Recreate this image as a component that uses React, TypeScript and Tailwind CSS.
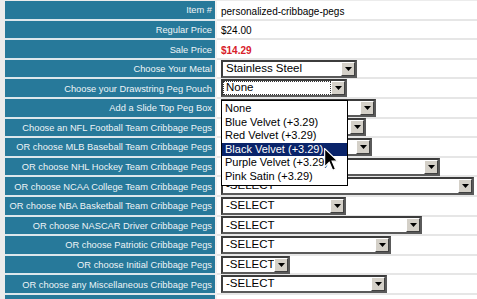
import React from 'react'

type Row = { label: string; sel?: number; text?: string; focus?: boolean }

const ROWS: Row[] = [
    { label: 'Choose Your Metal', sel: 136, text: 'Stainless Steel' },
    { label: 'Choose your Drawstring Peg Pouch', sel: 126, text: 'None', focus: true },
    { label: 'Add a Slide Top Peg Box', sel: 155, text: '-SELECT' },
    { label: 'Choose an NFL Football Team Cribbage Pegs', sel: 145, text: '-SELECT' },
    { label: 'OR choose MLB Baseball Team Cribbage Pegs', sel: 151, text: '-SELECT' },
    { label: 'OR choose NHL Hockey Team Cribbage Pegs', sel: 219, text: '-SELECT' },
    { label: 'OR choose NCAA College Team Cribbage Pegs', sel: 253, text: '-SELECT' },
    { label: 'OR choose NBA Basketball Team Cribbage Pegs', sel: 125, text: '-SELECT' },
    { label: 'OR choose NASCAR Driver Cribbage Pegs', sel: 201, text: '-SELECT' },
    { label: 'OR choose Patriotic Cribbage Pegs', sel: 170, text: '-SELECT' },
    { label: 'OR choose Initial Cribbage Pegs', sel: 69, text: '-SELECT' },
    { label: 'OR choose any Miscellaneous Cribbage Pegs', sel: 166, text: '-SELECT' },
    { label: '' },
]

const OPTIONS = ['None', 'Blue Velvet (+3.29)', 'Red Velvet (+3.29)', 'Black Velvet (+3.29)', 'Purple Velvet (+3.29)', 'Pink Satin (+3.29)']

const Select = ({ width, text, focus }: { width: number; text: string; focus?: boolean }) => (
    <div
        className="flex items-center h-[18px] bg-white border-2 border-t-[#3c3c3c] border-l-[#3c3c3c] border-b-[#5a5a5a] border-r-[#5a5a5a] box-border"
        style={{ width }}
    >
        <div className={`flex-1 h-full flex items-center pl-[3px] text-[11.5px] text-black leading-none overflow-hidden whitespace-nowrap ${focus ? 'outline outline-1 outline-dotted outline-[#333] -outline-offset-1' : ''}`}>
            {text}
        </div>
        <div className="w-[14px] h-[14px] bg-[#d4d0c8] border border-t-white border-l-white border-b-[#404040] border-r-[#404040] box-border flex items-center justify-center">
            <svg width="7" height="4" viewBox="0 0 7 4"><path d="M0 0h7L3.5 4z" fill="#000" /></svg>
        </div>
    </div>
)

const LabelRow = ({ label, children }: { label: string; children?: React.ReactNode }) => (
    <div className="flex h-[19.6px] box-border">
        <div className="w-[210px] shrink-0 bg-[#27799a] border-b-2 border-[#dde7ec] flex items-center justify-end pr-[3px] pt-[3px] text-[9.3px] text-[#eef4f7] whitespace-nowrap">
            {label}
        </div>
        <div className="w-[2px] shrink-0 bg-[#f2f2f2]" />
        <div className="flex-1 bg-white border-b-2 border-[#e6e6e6] flex items-center pl-[4px] text-[10px] text-black whitespace-nowrap">
            {children}
        </div>
    </div>
)

export default function App() {
    return (
        <div className="relative w-[477px] h-[299px] overflow-hidden bg-[#ececec] pt-[1px] pl-[5px]" style={{ fontFamily: '"Liberation Sans", Arial, sans-serif' }}>
            <div className="flex flex-col">
                <LabelRow label="Item #"><span className="pt-[3px]">personalized-cribbage-pegs</span></LabelRow>
                <LabelRow label="Regular Price"><span className="pt-[3px]">$24.00</span></LabelRow>
                <LabelRow label="Sale Price"><span className="pt-[3px] font-bold text-[#d8202a]">$14.29</span></LabelRow>
                {ROWS.map((r, i) => (
                    <LabelRow key={i} label={r.label}>
                        {r.sel && <Select width={r.sel} text={r.text!} focus={r.focus} />}
                    </LabelRow>
                ))}
            </div>

            <div className="absolute left-[221px] top-[100px] w-[127px] bg-white border border-black py-[1px] text-[11px] leading-[13.6px] text-black">
                {OPTIONS.map((o, i) => (
                    <div key={o} className={`pl-[3px] whitespace-nowrap ${i === 3 ? 'bg-[#0a246a] text-white' : ''}`}>{o}</div>
                ))}
            </div>

            <svg className="absolute left-[324px] top-[148px]" width="15" height="24" viewBox="0 0 13 21">
                <path d="M0.5 0.5 L0.5 16.5 L4.5 12.5 L7.5 19.5 L10 18.5 L7 11.5 L12 11.5 Z" fill="#000" stroke="#fff" strokeWidth="1" />
            </svg>
        </div>
    )
}
